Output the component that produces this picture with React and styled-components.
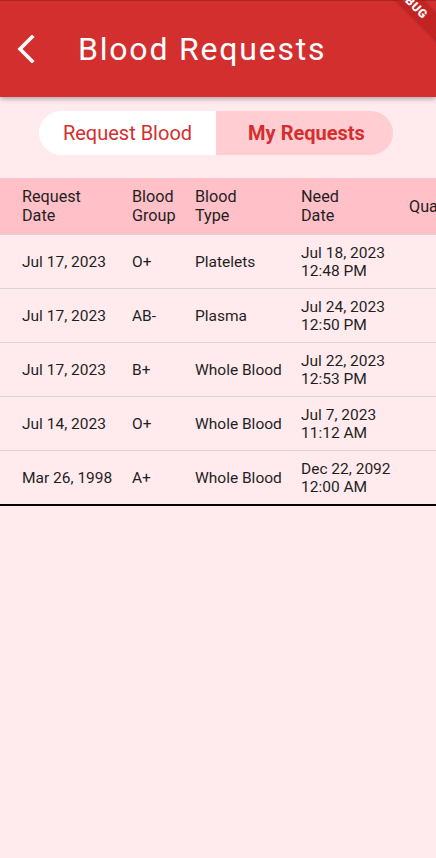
import React from 'react';
import styled, { createGlobalStyle } from 'styled-components';

const GlobalStyle = createGlobalStyle`
  html, body { margin: 0; padding: 0; background: #ffebee; }
  body { font-family: Roboto, "Noto Sans", Arial, sans-serif; -webkit-font-smoothing: antialiased; }
`;

const Screen = styled.div`
  position: relative;
  width: 436px;
  height: 858px;
  overflow: hidden;
  background: #ffebee;
  display: flex;
  flex-direction: column;
`;

const AppBar = styled.header`
  position: relative;
  z-index: 1;
  height: 96px;
  border-top: 1px solid #a92626;
  background: #d32f2f;
  box-shadow: 0 2px 5px rgba(0, 0, 0, 0.3);
  display: flex;
  align-items: center;
  flex-shrink: 0;
`;

const BackButton = styled.button`
  border: 0;
  background: none;
  padding: 0 0 0 15px;
  width: 78px;
  height: 56px;
  display: flex;
  align-items: center;
  cursor: pointer;
`;

const Title = styled.h1`
  margin: 0;
  color: #fff;
  font-family: Roboto, sans-serif;
  font-weight: 400;
  font-size: 32px;
  letter-spacing: 1.8px;
`;

const Banner = styled.div`
  position: absolute;
  top: -7px;
  right: -30px;
  width: 110px;
  height: 18px;
  transform: rotate(45deg);
  background: rgba(183, 28, 28, 0.63);
  box-shadow: 0 0 4px rgba(0, 0, 0, 0.3);
  color: #fff;
  font-family: Roboto, sans-serif;
  font-weight: 900;
  font-size: 12px;
  letter-spacing: 0.6px;
  line-height: 18px;
  text-align: center;
  z-index: 5;
`;

const Body = styled.main`
  display: flex;
  flex-direction: column;
  padding-top: 14px;
`;

const Toggle = styled.div`
  align-self: center;
  margin-right: 4px;
  width: 354px;
  height: 44px;
  border-radius: 22px;
  overflow: hidden;
  display: grid;
  grid-template-columns: 177px 177px;
`;

const ToggleOption = styled.button`
  border: 0;
  margin: 0;
  padding: 0;
  background: ${p => (p.$active ? '#ffcdd2' : '#ffffff')};
  color: #d32f2f;
  font-family: Roboto, sans-serif;
  font-size: 20px;
  font-weight: ${p => (p.$active ? 700 : 400)};
  display: flex;
  align-items: center;
  justify-content: center;
  padding-left: ${p => (p.$active ? '4px' : '0')};
`;

const TableWrap = styled.div`
  margin-top: 23px;
  width: 436px;
  overflow: hidden;
  border-bottom: 2px solid #000;
`;

const Row = styled.div`
  display: grid;
  grid-template-columns: 110px 63px 106px 108px 100px 90px;
  padding-left: 22px;
  width: max-content;
  min-width: 436px;
  box-sizing: border-box;
  height: ${p => (p.$header ? '56px' : '54px')};
  background: ${p => (p.$header ? '#ffc0c8' : 'transparent')};
  border-top: ${p => (p.$header ? 'none' : '1px solid #ddd3d4')};
  align-items: center;
  font-family: Roboto, sans-serif;
  font-size: ${p => (p.$header ? '16.2px' : '15.5px')};
  color: #1f1f1f;
`;

const Cell = styled.div`
  line-height: ${p => (p.$header ? '19px' : '18px')};
  white-space: nowrap;
  text-align: ${p => (p.$numeric ? 'right' : 'left')};
  padding-right: ${p => (p.$numeric ? '16px' : '0')};
`;

const Chevron = () => (
  <svg width="22" height="28" viewBox="0 0 22 28" fill="none">
    <polyline points="17,2 5,14 17,26" stroke="#fff" strokeWidth="3.6" strokeLinecap="square" strokeLinejoin="miter" />
  </svg>
);

const header = [['Request', 'Date'], ['Blood', 'Group'], ['Blood', 'Type'], ['Need', 'Date'], ['Quantity'], ['Status']];

const rows = [
  ['Jul 17, 2023', 'O+', 'Platelets', ['Jul 18, 2023', '12:48 PM'], '2', 'Pending'],
  ['Jul 17, 2023', 'AB-', 'Plasma', ['Jul 24, 2023', '12:50 PM'], '1', 'Pending'],
  ['Jul 17, 2023', 'B+', 'Whole Blood', ['Jul 22, 2023', '12:53 PM'], '3', 'Pending'],
  ['Jul 14, 2023', 'O+', 'Whole Blood', ['Jul 7, 2023', '11:12 AM'], '1', 'Pending'],
  ['Mar 26, 1998', 'A+', 'Whole Blood', ['Dec 22, 2092', '12:00 AM'], '2', 'Pending'],
];

const Lines = ({ value }) =>
  Array.isArray(value)
    ? value.map((l, i) => (
        <React.Fragment key={i}>
          {l}
          {i < value.length - 1 && <br />}
        </React.Fragment>
      ))
    : value;

export default function App() {
  return (
    <>
      <GlobalStyle />
      <Screen>
        <AppBar>
          <BackButton aria-label="Back">
            <Chevron />
          </BackButton>
          <Title>Blood Requests</Title>
        </AppBar>
        <Banner>DEBUG</Banner>
        <Body>
          <Toggle>
            <ToggleOption>Request Blood</ToggleOption>
            <ToggleOption $active>My Requests</ToggleOption>
          </Toggle>
          <TableWrap>
            <Row $header>
              {header.map((h, i) => (
                <Cell $header key={i}>
                  <Lines value={h} />
                </Cell>
              ))}
            </Row>
            {rows.map((r, ri) => (
              <Row key={ri}>
                {r.map((c, ci) => (
                  <Cell key={ci} $numeric={ci === 4}>
                    <Lines value={c} />
                  </Cell>
                ))}
              </Row>
            ))}
          </TableWrap>
        </Body>
      </Screen>
    </>
  );
}
